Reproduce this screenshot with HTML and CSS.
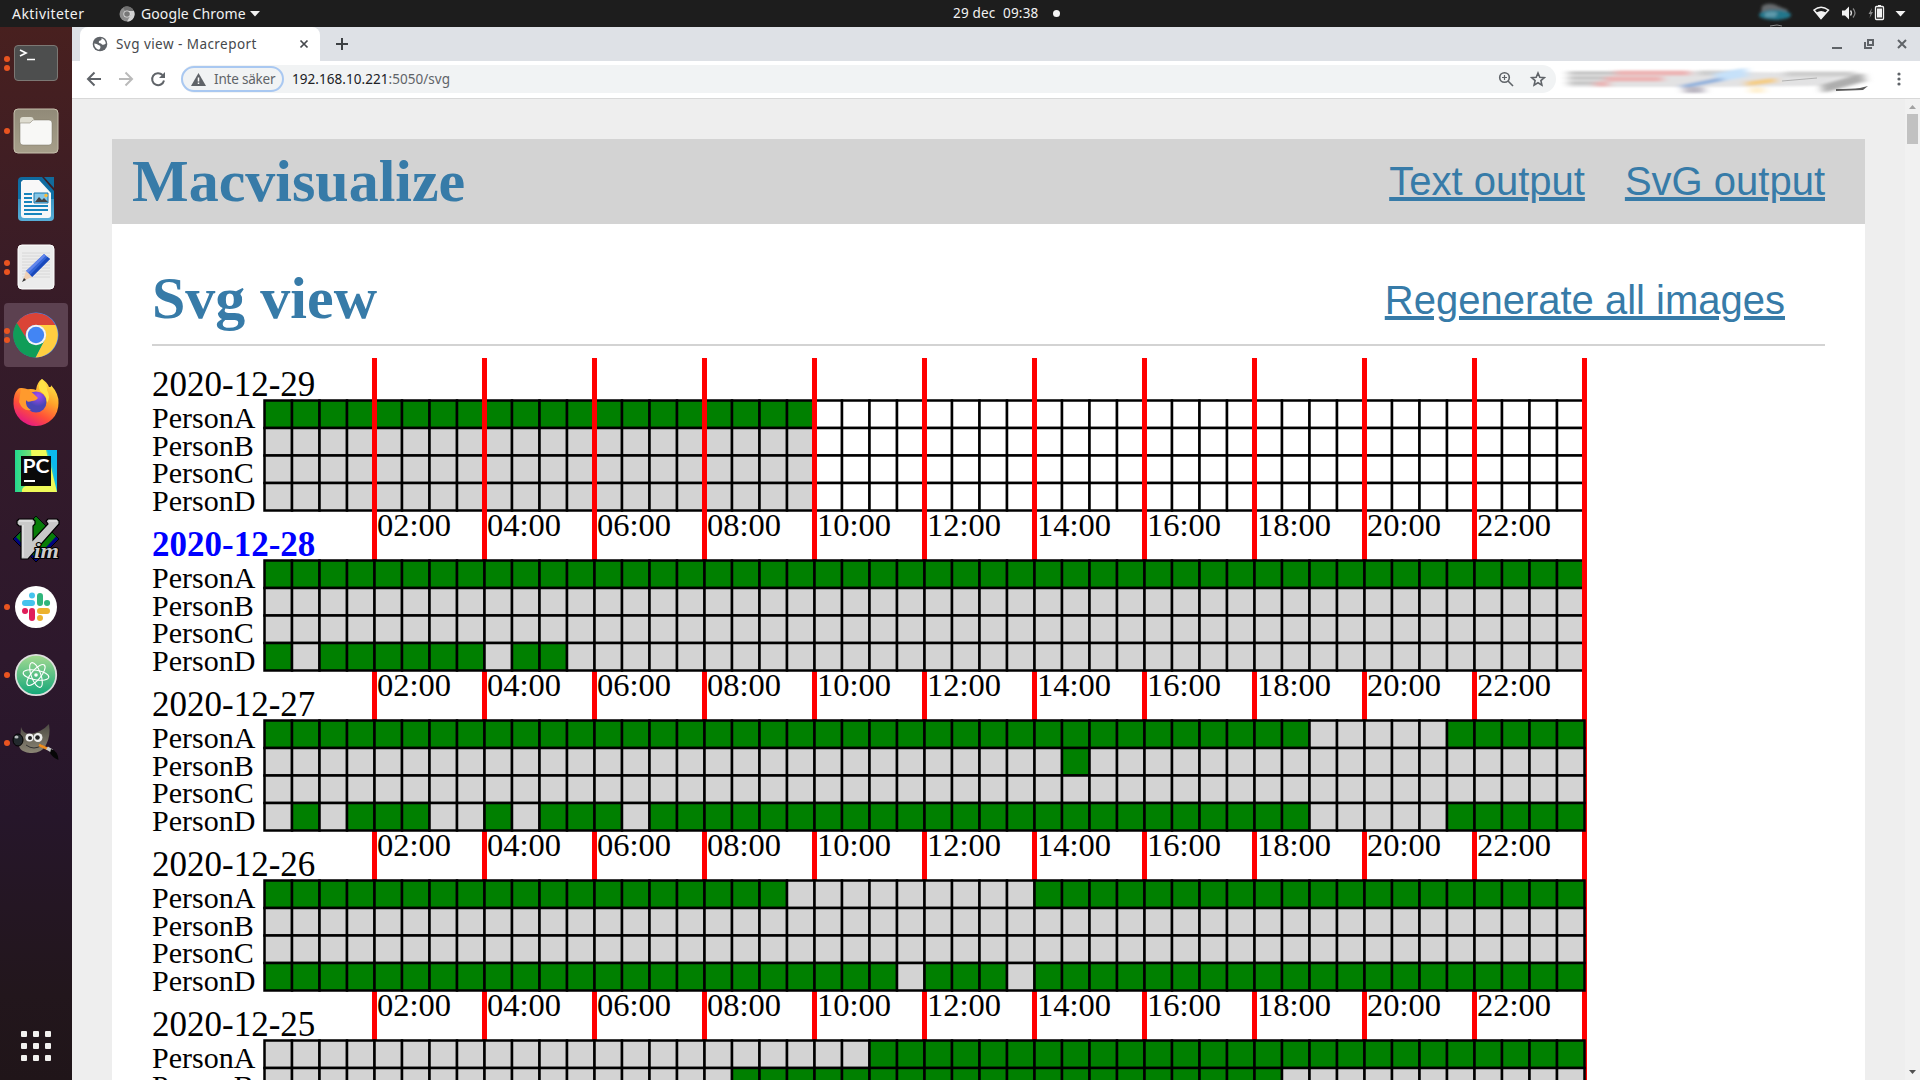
FILE: index.html
```html
<!DOCTYPE html>
<html lang="sv">
<head>
<meta charset="utf-8">
<title>Svg view - Macreport</title>
<link rel="stylesheet" href="styles.css">
</head>
<body>
<header class="topbar">
  <span class="activities">Aktiviteter</span>
  <span class="appmenu">
    <svg width="16" height="16" viewBox="0 0 16 16"><circle cx="8" cy="8" r="7.500" fill="#8c8c8c"/><path d="M8 8 4 1.600A7.500 7.500 0 0 1 15 5Z" fill="#6f6f6f"/><path d="M8 5h7a7.500 7.500 0 0 1-7 10.500l3.500-6Z" fill="#d2d2d2"/><circle cx="8" cy="8" r="3.600" fill="#e0e0e0"/><circle cx="8" cy="8" r="2.800" fill="#777"/></svg>
    <span class="appname">Google Chrome</span>
    <svg class="caret" width="10" height="6" viewBox="0 0 10 6"><path d="M0 0h10L5 5.500Z" fill="#f2f2f2"/></svg>
  </span>
  <span class="clock"><span class="date">29 dec</span><span>09:38</span><i class="notice"></i></span>
  <svg class="status" width="164" height="27" viewBox="0 0 164 27">
    <defs><filter id="soft" x="-30%" y="-50%" width="160%" height="200%"><feGaussianBlur stdDeviation="1.500"/></filter></defs>
    <g filter="url(#soft)"><path d="M6 6Q14 1 24 7L32 10 30 14H5Z" fill="#666b6e"/><ellipse cx="19" cy="15" rx="16" ry="5" fill="#24778c"/><path d="M9 13q7-3 13 0l-3 4H9Z" fill="#5e9aab"/></g>
    <path d="M14 26q8-2 12 0" stroke="#888" fill="none"/>
    <path d="M58 10Q65 4.500 72.500 10L65 18.500Z" fill="none" stroke="#f2f2f2" stroke-width="1.500"/><path d="M60.500 12.500Q65 9.500 70 12.500L65 19Z" fill="#f2f2f2"/>
    <path d="M86 10.500h3l4-4v13l-4-4h-3Z" fill="#f2f2f2"/><path d="M94.500 10.500q2 2.500 0 5" stroke="#ddd" fill="none" stroke-width="1.300"/><path d="M97 8.500q4 4.500 0 9" stroke="#888" fill="none" stroke-width="1.200"/>
    <path d="M116 8l-3.500 6h2L113.500 18l3.500-6h-2Z" fill="#888"/><rect x="119.500" y="6.500" width="8" height="13" rx="1" fill="none" stroke="#f2f2f2" stroke-width="1.300"/><path d="M122 5h3v2h-3Z" fill="#f2f2f2"/><path d="M121 8.500h5v9h-5Z" fill="#f2f2f2"/>
    <path d="M139.500 11h10l-5 5.500Z" fill="#f2f2f2"/>
  </svg>
</header>

<div class="desktop">
  <nav class="dock">
    <div class="app"><span class="dots"><i></i><i></i></span>
      <svg width="48" height="48" viewBox="0 0 48 48"><rect x="2.500" y="6.500" width="43" height="35" rx="3.500" fill="#4d4e4e" stroke="#7c7874"/><path d="M8 11l6 3-6 3M15 20.500h8" stroke="#fff" stroke-width="1.700" fill="none"/></svg></div>
    <div class="app"><span class="dots"><i></i></span>
      <svg width="48" height="48" viewBox="0 0 48 48"><defs><linearGradient id="fi" x2="0" y2="1"><stop stop-color="#918a78"/><stop offset="1" stop-color="#a79f8a"/></linearGradient></defs><rect x="2" y="2" width="44" height="44" rx="4" fill="url(#fi)" stroke="#c6bfad"/><path d="M8 16v-3a3 3 0 0 1 3-3h8q2 0 2.500 2l1.500 1.500h-1L20 17Z" fill="#dedcd0"/><path d="M8 16h10l3-3h16a3 3 0 0 1 3 3v19a3 3 0 0 1-3 3H11a3 3 0 0 1-3-3Z" fill="#f8f8f6" stroke="#7b7565" stroke-width=".5"/></svg></div>
    <div class="app">
      <svg width="48" height="48" viewBox="0 0 48 48"><defs><linearGradient id="wr" x2="0" y2="1"><stop stop-color="#10699e"/><stop offset=".49" stop-color="#0e73a8"/><stop offset=".51" stop-color="#3b96c4"/><stop offset="1" stop-color="#57aed8"/></linearGradient></defs><path d="M10 2h20l12 14v26a4 4 0 0 1-4 4H10a4 4 0 0 1-4-4V6a4 4 0 0 1 4-4Z" fill="url(#wr)"/><path d="M32 2h10v11Z" fill="#126b9c"/><path d="M11 5h16l12 13v22a3 3 0 0 1-3 3H12a3 3 0 0 1-3-3V7Z" fill="#f8f8f8"/><path d="M12 19h8M12 23h8M12 27h8M12 31h24M12 35h24M12 39h18" stroke="#1785bd" stroke-width="2"/><path d="M22 18h14v10H22Z" fill="#86c7e7" stroke="#1778ad"/><path d="M23 27l4-5 3 3 2-2 4 4Z" fill="#444"/><circle cx="34" cy="20.500" r="1.700" fill="#fb3"/></svg></div>
    <div class="app"><span class="dots"><i></i><i></i></span>
      <svg width="48" height="48" viewBox="0 0 48 48"><rect x="6" y="2" width="36" height="44" rx="4" fill="#ececec" stroke="#fff"/><path d="M10 10h28M10 13h28M10 16h28M10 19h28M10 22h28M10 25h28M10 28h28M10 31h28M10 34h28" stroke="#d3d3d3" stroke-width=".8"/><path d="M32 11l6 5-18 18-6-6Z" fill="#3465d8"/><path d="M32 11l2 1.500L16 30l-2-2Z" fill="#6286eb"/><path d="M35.500 14l2.500 2-18 18-2-2Z" fill="#1949bb"/><path d="M14 28l6 6-9 4Z" fill="#efd0b4"/><path d="M12 35l2 2-4 2Z" fill="#333"/></svg></div>
    <div class="app current"><span class="dots"><i></i><i></i></span>
      <svg width="48" height="48" viewBox="0 0 48 48"><circle cx="24" cy="24" r="22.500" fill="#4285f4"/><path d="M4.500 12.500A22.500 22.500 0 0 1 43.500 14H24A10 10 0 0 0 15 29Z" fill="#da4437"/><path d="M43.500 14A22.500 22.500 0 0 1 23.500 46.500L32.500 29A10 10 0 0 0 24 14Z" fill="#ffce41"/><path d="M4.800 12A22.500 22.500 0 0 0 23.500 46.500L32 30Q24 38 16 30Z" fill="#109d58"/><circle cx="24" cy="24" r="10.200" fill="#f4f4f4"/><circle cx="24" cy="24" r="8.200" fill="#4285f4"/></svg></div>
    <div class="app">
      <svg width="48" height="48" viewBox="0 0 48 48"><defs><linearGradient id="ff" x1=".85" y1="0" x2=".3" y2="1"><stop stop-color="#fff04a"/><stop offset=".4" stop-color="#ffa22a"/><stop offset=".7" stop-color="#ff5038"/><stop offset="1" stop-color="#e31587"/></linearGradient><radialGradient id="fp" cx=".6" cy=".2"><stop stop-color="#a34bf5"/><stop offset="1" stop-color="#4a45b5"/></radialGradient></defs><path d="M30 0q5 3 7 8 3 0 2-2 8 9 7.500 18A22.500 22.500 0 0 1 1.500 25Q1 15 6 10q1-1 3-1l4 2q6-2 11 0Q25 3 30 0Z" fill="url(#ff)"/><circle cx="24" cy="23" r="10.500" fill="url(#fp)"/><path d="M9 9q6 0 9 3 3 2 8 7-2 3-6 3-5 2-6-1-1 7 5 10-8 2-12-8Z" fill="#ff9a2d"/><path d="M30 0q-5 6-2 12 7 4 7 12 4-6 0-13 1-3-5-11Z" fill="#ffe347"/></svg></div>
    <div class="app">
      <svg width="48" height="48" viewBox="0 0 48 48"><defs><linearGradient id="pc"><stop stop-color="#22d88f"/><stop offset=".5" stop-color="#8de76b"/><stop offset="1" stop-color="#0bb9ed"/></linearGradient></defs><path d="M3 3h42v42H3Z" fill="url(#pc)"/><path d="M19 3h15l7 30-10 12H10Q9 38 21 38Z" fill="#effa58"/><path d="M35 3l7 20 3 22V3Z" fill="#0bb9ed"/><path d="M39 20l6 25H27Z" fill="#effa58"/><path d="M9 9h30v30H9Z" fill="#090909"/><path d="M12 34h11" stroke="#fff" stroke-width="2"/><text class="pc-text" x="10.500" y="26" textLength="27" lengthAdjust="spacingAndGlyphs">PC</text></svg></div>
    <div class="app">
      <svg width="48" height="48" viewBox="0 0 48 48"><path d="M24 1l23 23-23 23L1 24Z" fill="#00037e" stroke="#000"/><path d="M24 1.500l20 20L24 43 4 22Z" fill="#087d08"/><path d="M5 6l2-2h14l2 2v3l-2 2v14L36 9l-2-3 2-2h9l2 2v3L16 44H9V11H7L5 9Z" fill="#c9c9c9" stroke="#000" stroke-width="1.200"/><path d="M7 6h13M11 10v32M37 6h8" stroke="#eee"/><text class="vim-text" x="22" y="43" textLength="25" lengthAdjust="spacingAndGlyphs">im</text></svg></div>
    <div class="app"><span class="dots"><i></i></span>
      <svg width="48" height="48" viewBox="0 0 48 48"><circle cx="24" cy="24" r="21" fill="#fff"/><g stroke-width="6" stroke-linecap="round"><path d="M13 20h7M20 12.500v.1" stroke="#45c3ed"/><path d="M28 13v7M35 20h.1" stroke="#30b67c"/><path d="M28 28h7M28 35v.1" stroke="#ecb22e"/><path d="M20 28v7M13 28h.1" stroke="#e01e5a"/></g></svg></div>
    <div class="app"><span class="dots"><i></i></span>
      <svg width="48" height="48" viewBox="0 0 48 48"><defs><linearGradient id="at" x2="0" y2="1"><stop stop-color="#a5da91"/><stop offset="1" stop-color="#12a779"/></linearGradient></defs><circle cx="24" cy="24" r="20.200" fill="url(#at)" stroke="#dedede" stroke-width="1.800"/><g fill="none" stroke="#fff" stroke-width="1.100"><ellipse cx="24" cy="24" rx="13" ry="4.800" transform="rotate(10 24 24)"/><ellipse cx="24" cy="24" rx="13" ry="4.800" transform="rotate(70 24 24)"/><ellipse cx="24" cy="24" rx="13" ry="4.800" transform="rotate(130 24 24)"/></g><circle cx="24" cy="24" r="1.800" fill="#fff"/></svg></div>
    <div class="app"><span class="dots"><i></i></span>
      <svg width="48" height="48" viewBox="0 0 48 48"><defs><linearGradient id="gi" x2="0" y2="1"><stop stop-color="#4d4a43"/><stop offset="1" stop-color="#8b8675"/></linearGradient></defs><g transform="translate(0 3)"><path d="M9 5q2 7 9 7 12-2 19-10 2 12-3 21-5 9-16 8Q4 29 8 19Z" fill="url(#gi)"/><circle cx="17.500" cy="15.500" r="4" fill="#eee"/><circle cx="26" cy="15.500" r="4.500" fill="#eee"/><circle cx="18" cy="16" r="2" fill="#222"/><circle cx="25.500" cy="15.500" r="2.300" fill="#222"/><ellipse cx="6" cy="18" rx="5" ry="6" fill="#22292d" stroke="#000"/><ellipse cx="4.500" cy="15" rx="2" ry="1.500" fill="#b6babb"/><path d="M14 23q8 6 16 0" fill="none" stroke="#333"/><path d="M27 23l9 4" stroke="#ef8d1d" stroke-width="2.500"/><path d="M35 26l5 3" stroke="#ccc" stroke-width="3.500"/><path d="M39 27q7 2 7.500 11Q41 36 38 31Z" fill="#060606"/></g></svg></div>
    <div class="app launcher">
      <svg width="30" height="30" viewBox="0 0 30 30"><g fill="#f2f1ef"><rect width="6" height="6" rx="1"/><rect x="12" width="6" height="6" rx="1"/><rect x="24" width="6" height="6" rx="1"/><rect y="12" width="6" height="6" rx="1"/><rect x="12" y="12" width="6" height="6" rx="1"/><rect x="24" y="12" width="6" height="6" rx="1"/><rect y="24" width="6" height="6" rx="1"/><rect x="12" y="24" width="6" height="6" rx="1"/><rect x="24" y="24" width="6" height="6" rx="1"/></g></svg></div>
  </nav>

  <main class="browser">
    <div class="tabs">
      <div class="tab">
        <svg width="16" height="16" viewBox="0 0 16 16"><circle cx="8" cy="8" r="7.300" fill="#5f6368"/><path d="M9.500 2.200Q13.500 3.500 13.800 7.500 11.500 9.500 10 8.500 9.500 7 7 7q-1-2 1.500-2.500Q10 4 9.500 2.200Z" fill="#fff"/><path d="M2.200 7.500Q5 7.500 6.500 9q2 .5 2 2 0 1.500-1.500 2.800Q2.400 12.500 2.200 7.500Z" fill="#fff"/></svg>
        <span class="tabtitle">Svg view - Macreport</span>
        <svg width="16" height="16" viewBox="0 0 16 16"><path d="M4.500 4.500l7 7M11.500 4.500l-7 7" stroke="#45484c" stroke-width="1.700"/></svg>
      </div>
      <svg class="newtab" width="14" height="14" viewBox="0 0 14 14"><path d="M7 1v12M1 7h12" stroke="#3c4043" stroke-width="2"/></svg>
      <svg class="winctl" width="76" height="16" viewBox="0 0 76 16"><g fill="none" stroke="#5f6368" stroke-width="2"><path d="M0 12h10"/><path d="M36 4h5v5h-5ZM33 6v6h7"/><path d="M66 4l8 8M74 4l-8 8"/></g></svg>
    </div>
    <div class="toolbar">
      <svg class="navicons" width="80" height="16" viewBox="0 0 80 16"><g fill="none" stroke-width="2"><path d="M15 8H2M8.500 1.500 2 8l6.500 6.500" stroke="#5f6368"/><path d="M33 8h13M39.500 1.500 46 8l-6.500 6.500" stroke="#bababa"/><path d="M76.500 4A6 6 0 1 0 78 9.500" stroke="#5f6368"/></g><path d="M79 1v6h-6Z" fill="#5f6368"/></svg>
      <div class="omnibox">
        <div class="chip"><svg width="15" height="13" viewBox="0 0 15 13"><path d="M7.500 0 15 13H0Z" fill="#5f6368"/><path d="M7.500 4.500v4M7.500 9.500v1.500" stroke="#fff" stroke-width="1.500"/></svg><span class="chiptext">Inte säker</span></div>
        <span class="url"><b>192.168.10.221</b>:5050/svg</span>
        <svg class="pageicons" width="48" height="16" viewBox="0 0 48 16"><g fill="none" stroke="#5f6368" stroke-width="1.600"><circle cx="6.500" cy="6.500" r="4.800"/><path d="M10 10l5 5"/><path d="M4 6.500h5M6.500 4v5" stroke-width="1.200"/><path d="M40 2l1.800 4.200 4.500.4-3.400 3 1 4.500L40 11.700l-3.900 2.400 1-4.500-3.400-3 4.500-.4Z"/></g></svg>
      </div>
      <svg class="extensions" width="324" height="37" viewBox="0 0 324 37">
        <defs><filter id="smear" x="-10%" y="-60%" width="120%" height="220%"><feGaussianBlur stdDeviation="4 1.300"/></filter></defs>
        <g filter="url(#smear)"><path d="M8 10h112l60 1 115 1-40 13-110 1H8Z" fill="#e2e2e3"/><path d="M8 12h50M8 17h45M8 22h40" stroke="#c2c2c2" stroke-width="3"/><path d="M55 12h75M45 18h58M35 23h14" stroke="#ecb4b4" stroke-width="5"/><path d="M138 12h40M225 13h70" stroke="#cdcdcd" stroke-width="5"/><path d="M155 17l32-6" stroke="#c6e1f9" stroke-width="9"/><path d="M122 26l40-8" stroke="#8fb0dc" stroke-width="4"/><path d="M124 29h20" stroke="#bcb8c2" stroke-width="6"/><path d="M186 23l30-4" stroke="#f4ce87" stroke-width="5"/><path d="M190 29h14" stroke="#fff0cf" stroke-width="6"/><path d="M262 28l42-12" stroke="#adadad" stroke-width="9"/></g>
        <path d="M222 20l35-3" stroke="#a5a5a5" fill="none" stroke-width=".8"/><path d="M276 28q15 0 24-1l8-2-5 4-27 1Z" fill="#5b5b5b"/>
      </svg>
      <svg class="kebab" width="4" height="14" viewBox="0 0 4 14"><g fill="#5f6368"><circle cx="2" cy="2" r="1.600"/><circle cx="2" cy="7" r="1.600"/><circle cx="2" cy="12" r="1.600"/></g></svg>
    </div>
    <div class="viewport">
      <div class="page">
        <div class="sitebar"><h1>Macvisualize</h1><div class="links"><a href="#">Text output</a><a href="#">SvG output</a></div></div>
        <section class="content">
          <div class="heading"><h1>Svg view</h1><a href="#">Regenerate all images</a></div>
          <svg class="chart" id="chart" width="1475" height="740" viewBox="0 0 590 296"></svg>
        </section>
      </div>
      <div class="scrollbar"><svg width="7" height="4" viewBox="0 0 7 4"><path d="M3.500 0 7 4H0Z" fill="#a3a3a3"/></svg><i class="thumb"></i><svg width="7" height="4" viewBox="0 0 7 4"><path d="M0 0h7L3.500 4Z" fill="#505050"/></svg></div>
    </div>
  </main>
</div>
<script src="chart.js"></script>
</body>
</html>
```
FILE: styles.css
```css
* { box-sizing: border-box; }
body { margin: 0; width: 1920px; height: 1080px; overflow: hidden; font-family: "Noto Sans", sans-serif; background: #eee; }
svg { display: block; flex: none; }

.topbar { position: relative; display: flex; align-items: center; height: 27px; padding: 0 0 0 12px; background: #1d1d1d; color: #f2f2f2; font-size: 14px; line-height: 27px; white-space: nowrap; }
.activities { width: 107px; letter-spacing: .45px; }
.appmenu { display: flex; align-items: center; gap: 6px; }
.appname { width: 104px; letter-spacing: .1px; }
.caret { margin-left: -1px; }
.clock { position: absolute; left: 953px; display: flex; align-items: center; font-size: 13.500px; }
.date { width: 50px; letter-spacing: .2px; }
.clock span + span { letter-spacing: .2px; }
.notice { width: 7px; height: 7px; margin-left: 14px; border-radius: 50%; background: #f5f5f5; }
.status { margin-left: auto; }

.desktop { display: flex; height: 1053px; }
.dock { display: flex; flex-direction: column; gap: 4px; width: 72px; padding: 4px 4px 2px; background: linear-gradient(#48201f, #351b29 30%, #2d182c 60%, #26162a 75%, #22161c 92%, #201519); }
.app { position: relative; display: flex; align-items: center; justify-content: center; height: 64px; border-radius: 4px; }
.current { background: #5c4150; }
.launcher { margin-top: auto; }
.dots { position: absolute; left: 0; top: 0; height: 64px; display: flex; flex-direction: column; justify-content: center; gap: 3px; }
.dots i { width: 6px; height: 6px; border-radius: 50%; background: #e95420; }
.pc-text { font: bold 18px Lato, sans-serif; fill: #fff; }
.vim-text { font: italic bold 20px "Liberation Serif", serif; fill: #ccc; stroke: #000; stroke-width: 2px; paint-order: stroke; }

.browser { display: flex; flex-direction: column; flex: 1; }
.tabs { display: flex; align-items: center; height: 34px; padding: 0 12px 0 8px; background: #dee1e6; }
.tab { display: flex; align-items: center; width: 240px; height: 34px; padding: 0 8px 0 12px; border-radius: 8px 8px 0 0; background: #fff; color: #45484c; font-size: 13.500px; white-space: nowrap; }
.tabtitle { flex: 1; padding-left: 8px; letter-spacing: .45px; }
.newtab { margin-left: 15px; }
.winctl { margin-left: auto; }
.toolbar { display: flex; align-items: center; height: 38px; padding: 0 19px 2px 14px; background: #fff; box-shadow: inset 0 -1px #d8d8d8; }
.navicons { margin-right: 15px; }
.omnibox { display: flex; align-items: center; width: 1375px; height: 28px; border-radius: 14px; background: #f1f3f4; font-size: 13.500px; }
.chip { display: flex; align-items: center; width: 103px; height: 26px; padding-left: 8px; border: 2px solid #a9c8f1; border-radius: 13px; color: #5f6368; }
.chiptext { padding-left: 8px; white-space: nowrap; letter-spacing: -.2px; }
.url { padding-left: 8px; color: #5f6368; letter-spacing: .05px; }
.url b { font-weight: 400; color: #202124; }
.pageicons { margin: 0 10px 0 auto; }
.extensions { margin-left: 4px; }
.kebab { margin-left: auto; }

.viewport { display: flex; flex: 1; padding: 40px 0 0 40px; background: #eee; position: relative; }
.page { width: 1753px; height: 941px; background: #fff; font-family: "Liberation Serif", serif; overflow: hidden; }
.page h1 { margin: 0; font-size: 60px; line-height: 70px; color: #377ba8; }
.page a { font: 40px/46px "Liberation Sans", sans-serif; color: #377ba8; text-decoration-thickness: 4px; }
.sitebar { display: flex; justify-content: space-between; align-items: center; height: 85px; padding: 0 40px 1px 20px; background: #d3d3d3; }
.links { display: flex; gap: 40px; }
.content { padding: 40px; }
.heading { display: flex; justify-content: space-between; align-items: center; height: 82px; margin-bottom: 12px; padding: 0 40px 8px 0; border-bottom: 2px solid #d3d3d3; }
.heading h1 { margin-bottom: 4px; }
.chart text { font-family: "Liberation Serif", serif; font-size: 12px; }
.chart .day { font-size: 14px; }
.chart .weekstart { font-weight: bold; fill: blue; }
.chart .hour { font-size: 13px; }
.chart rect { stroke: #000; stroke-width: 1; }
.chart .on { fill: green; }
.chart .off { fill: lightgray; }
.chart .none { fill: #fff; }
.chart line { stroke: red; stroke-width: 2; }
.scrollbar { position: absolute; right: 0; top: 0; width: 15px; height: 981px; padding: 6px 0; display: flex; flex-direction: column; align-items: center; background: #f1f1f1; }
.thumb { width: 11px; height: 30px; margin: 5px 0 auto; background: #c1c1c1; }
```
FILE: chart.js
```js
// Each row lists half-hour runs: g = present, x = absent, w = not yet known.
const days = [
  ["2020-12-29", ["g20w28", "x20w28", "x20w28", "x20w28"]],
  ["2020-12-28", ["g48", "x48", "x48", "g1x1g6x1g2x37"]],
  ["2020-12-27", ["g38x5g5", "x29g1x18", "x48", "x1g1x1g3x2g1x1g3x1g24x5g5"]],
  ["2020-12-26", ["g19x9g20", "x48", "x48", "g23x1g3x1g20"]],
  ["2020-12-25", ["x22g26", "x17g20x11"]]
];
const kinds = { g: "on", x: "off", w: "none" };
const names = ["PersonA", "PersonB", "PersonC", "PersonD"];
const marker = (x, y, end) => `<line x1="${x}" y1="${y}" x2="${x}" y2="${end}"/>`;
let out = "";
for (let h = 1; h <= 12; h++) out += marker(45 + h * 44, 0, 296);
days.forEach(([date, rows], d) => {
  const top = d * 64;
  out += `<text class="day${d === 1 ? " weekstart" : ""}" x="0" y="${top + 15}">${date}</text>`;
  rows.forEach((runs, r) => {
    out += `<text x="0" y="${top + 28 + r * 11}">${names[r]}</text>`;
    let col = 0;
    for (const [, kind, count] of runs.matchAll(/([gxw])(\d+)/g)) {
      for (let i = 0; i < +count; i++, col++) {
        out += `<rect class="${kinds[kind]}" x="${45 + col * 11}" y="${top + 17 + r * 11}" width="11" height="11"/>`;
      }
    }
  });
  if (d < 4) for (let h = 1; h < 12; h++) {
    out += `<text class="hour" x="${45 + h * 44 + 1}" y="${top + 71}">${String(h * 2).padStart(2, "0")}:00</text>`;
  }
  if (d === 0) for (let h = 1; h <= 12; h++) out += marker(45 + h * 44, 0, 64);
  if (d === 1) out += marker(573, 64, 128);
});
document.getElementById("chart").innerHTML = out;
```
